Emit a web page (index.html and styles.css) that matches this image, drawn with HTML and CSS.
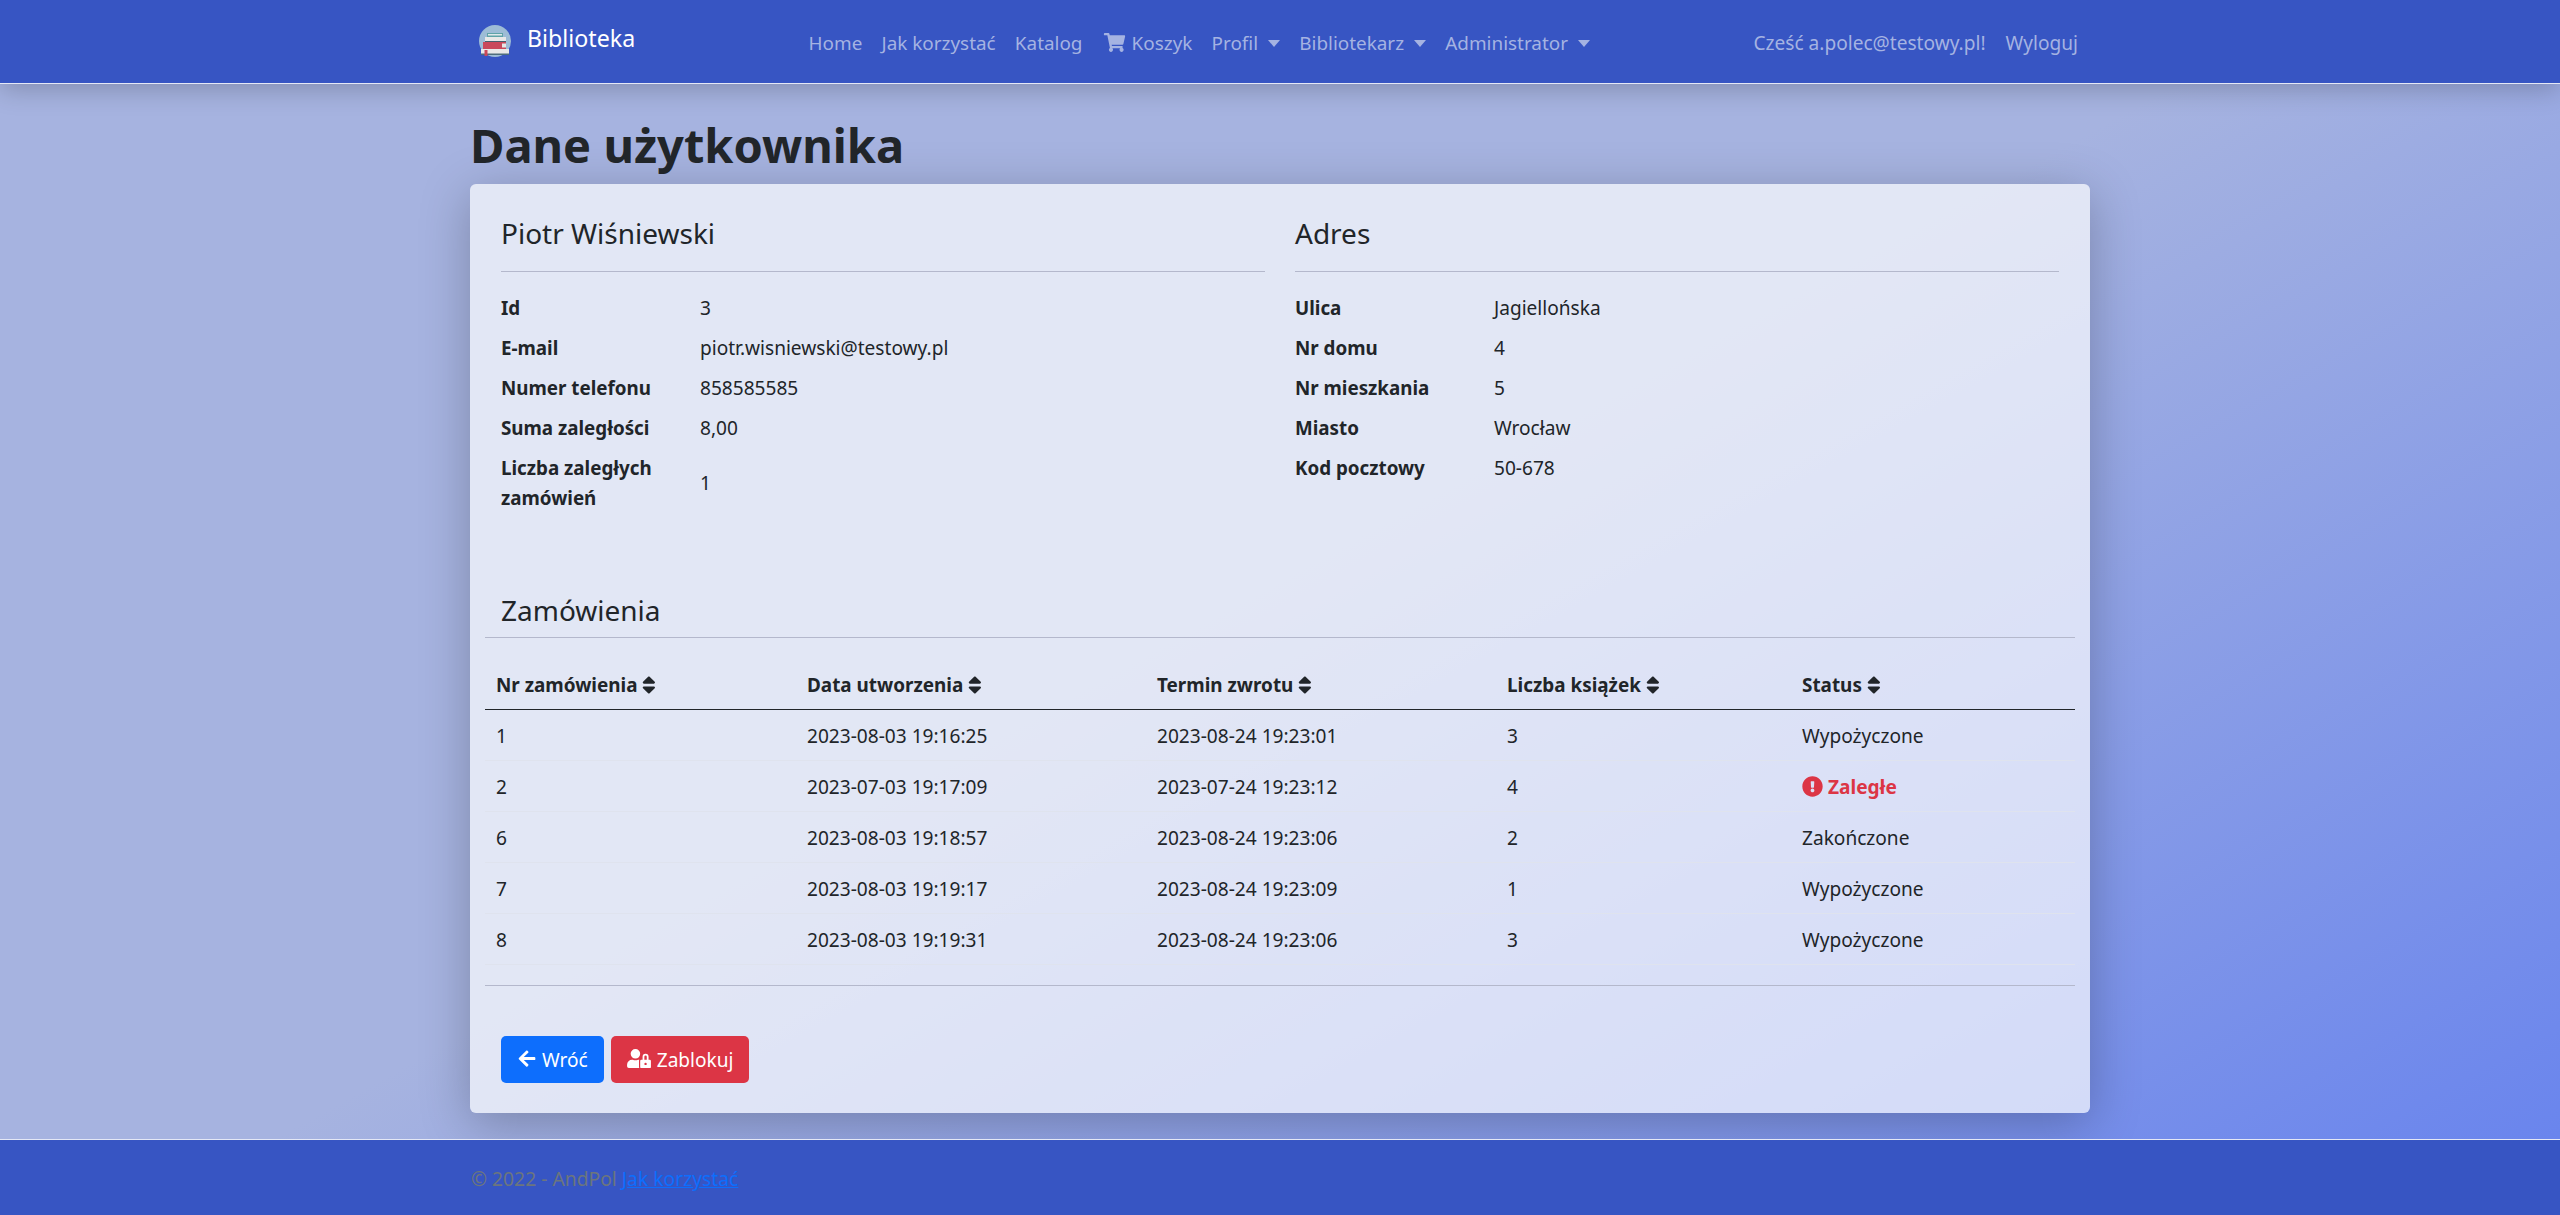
FILE: index.html
```html
<!DOCTYPE html>
<html lang="pl">
<head>
    <meta charset="UTF-8">
    <title>Dane użytkownika - Biblioteka</title>
    <link rel="stylesheet" href="styles.css">
</head>
<body>
    <nav class="navbar">
        <div class="navbar-inner">
            <a class="brand" href="#">
                <svg class="brand-logo" viewBox="0 0 32 32">
                    <circle cx="16" cy="16" r="16" fill="#9dbcd6"/>
                    <rect x="8" y="8" width="16" height="4" fill="#5fa3a8"/>
                    <rect x="9" y="9" width="14" height="1.5" fill="#dfe8ea"/>
                    <rect x="6" y="12" width="21" height="5" fill="#e8e8e8"/>
                    <rect x="6" y="16" width="21" height="1" fill="#45606e"/>
                    <rect x="4" y="17" width="23" height="7" fill="#c9485b"/>
                    <rect x="23" y="18.5" width="4" height="4" fill="#e6e6e6"/>
                    <rect x="2" y="24" width="28" height="5" fill="#e8e8e8"/>
                    <rect x="2" y="28.5" width="28" height="1.5" fill="#4d6d7c"/>
                    <rect x="5.5" y="25" width="3" height="6" fill="#c9485b"/>
                </svg>
                Biblioteka
            </a>
            <ul class="nav-list nav-main">
                <li><a class="nav-link" href="#">Home</a></li>
                <li><a class="nav-link" href="#">Jak korzystać</a></li>
                <li><a class="nav-link" href="#">Katalog</a></li>
                <li><a class="nav-link" href="#"><svg class="icon cart" viewBox="0 0 576 512"><path d="M528.12 301.319l47.273-208C578.806 78.301 567.391 64 551.99 64H159.208l-9.166-44.81C147.758 8.021 137.93 0 126.529 0H24C10.745 0 0 10.745 0 24v16c0 13.255 10.745 24 24 24h69.883l70.248 343.435C147.325 417.1 136 435.222 136 456c0 30.928 25.072 56 56 56s56-25.072 56-56c0-15.674-6.447-29.835-16.824-40h209.647C430.447 426.165 424 440.326 424 456c0 30.928 25.072 56 56 56s56-25.072 56-56c0-22.172-12.888-41.332-31.579-50.405l5.517-24.276c3.413-15.018-8.002-29.319-23.403-29.319H218.117l-6.545-32h293.145c11.206 0 20.92-7.754 23.403-18.681z"/></svg> Koszyk</a></li>
                <li><a class="nav-link caret" href="#">Profil</a></li>
                <li><a class="nav-link caret" href="#">Bibliotekarz</a></li>
                <li><a class="nav-link caret" href="#">Administrator</a></li>
            </ul>
            <ul class="nav-list nav-right">
                <li><a class="nav-link" href="#">Cześć a.polec@testowy.pl!</a></li>
                <li><a class="nav-link" href="#">Wyloguj</a></li>
            </ul>
        </div>
    </nav>

    <main class="container">
        <h1>Dane użytkownika</h1>
        <div class="card">
            <div class="row">
                <section class="col">
                    <h4>Piotr Wiśniewski</h4>
                    <hr>
                    <table class="info">
                        <tr><th>Id</th><td>3</td></tr>
                        <tr><th>E-mail</th><td>piotr.wisniewski@testowy.pl</td></tr>
                        <tr><th>Numer telefonu</th><td>858585585</td></tr>
                        <tr><th>Suma zaległości</th><td>8,00</td></tr>
                        <tr><th>Liczba zaległych zamówień</th><td>1</td></tr>
                    </table>
                </section>
                <section class="col">
                    <h4>Adres</h4>
                    <hr>
                    <table class="info">
                        <tr><th>Ulica</th><td>Jagiellońska</td></tr>
                        <tr><th>Nr domu</th><td>4</td></tr>
                        <tr><th>Nr mieszkania</th><td>5</td></tr>
                        <tr><th>Miasto</th><td>Wrocław</td></tr>
                        <tr><th>Kod pocztowy</th><td>50-678</td></tr>
                    </table>
                </section>
            </div>

            <h4 class="orders-title">Zamówienia</h4>
            <hr class="orders-rule">
            <table class="orders">
                <colgroup>
                    <col class="c1"><col class="c2"><col class="c3"><col class="c4"><col>
                </colgroup>
                <thead>
                    <tr>
                        <th>Nr zamówienia <svg class="icon sort" viewBox="0 0 320 512"><path d="M41 288h238c21.4 0 32.1 25.9 17 41L177 448c-9.4 9.4-24.6 9.4-33.9 0L24 329c-15.1-15.1-4.4-41 17-41zm255-105L177 64c-9.4-9.4-24.6-9.4-33.9 0L24 183c-15.1 15.1-4.4 41 17 41h238c21.4 0 32.1-25.9 17-41z"/></svg></th>
                        <th>Data utworzenia <svg class="icon sort" viewBox="0 0 320 512"><path d="M41 288h238c21.4 0 32.1 25.9 17 41L177 448c-9.4 9.4-24.6 9.4-33.9 0L24 329c-15.1-15.1-4.4-41 17-41zm255-105L177 64c-9.4-9.4-24.6-9.4-33.9 0L24 183c-15.1 15.1-4.4 41 17 41h238c21.4 0 32.1-25.9 17-41z"/></svg></th>
                        <th>Termin zwrotu <svg class="icon sort" viewBox="0 0 320 512"><path d="M41 288h238c21.4 0 32.1 25.9 17 41L177 448c-9.4 9.4-24.6 9.4-33.9 0L24 329c-15.1-15.1-4.4-41 17-41zm255-105L177 64c-9.4-9.4-24.6-9.4-33.9 0L24 183c-15.1 15.1-4.4 41 17 41h238c21.4 0 32.1-25.9 17-41z"/></svg></th>
                        <th>Liczba książek <svg class="icon sort" viewBox="0 0 320 512"><path d="M41 288h238c21.4 0 32.1 25.9 17 41L177 448c-9.4 9.4-24.6 9.4-33.9 0L24 329c-15.1-15.1-4.4-41 17-41zm255-105L177 64c-9.4-9.4-24.6-9.4-33.9 0L24 183c-15.1 15.1-4.4 41 17 41h238c21.4 0 32.1-25.9 17-41z"/></svg></th>
                        <th>Status <svg class="icon sort" viewBox="0 0 320 512"><path d="M41 288h238c21.4 0 32.1 25.9 17 41L177 448c-9.4 9.4-24.6 9.4-33.9 0L24 329c-15.1-15.1-4.4-41 17-41zm255-105L177 64c-9.4-9.4-24.6-9.4-33.9 0L24 183c-15.1 15.1-4.4 41 17 41h238c21.4 0 32.1-25.9 17-41z"/></svg></th>
                    </tr>
                </thead>
                <tbody>
                    <tr><td>1</td><td>2023-08-03 19:16:25</td><td>2023-08-24 19:23:01</td><td>3</td><td>Wypożyczone</td></tr>
                    <tr><td>2</td><td>2023-07-03 19:17:09</td><td>2023-07-24 19:23:12</td><td>4</td><td class="overdue"><svg class="icon alert" viewBox="0 0 512 512"><path d="M504 256c0 136.997-111.043 248-248 248S8 392.997 8 256C8 119.083 119.043 8 256 8s248 111.083 248 248zm-248 50c-25.405 0-46 20.595-46 46s20.595 46 46 46 46-20.595 46-46-20.595-46-46-46zm-43.673-165.346l7.418 136c.347 6.364 5.609 11.346 11.982 11.346h48.546c6.373 0 11.635-4.982 11.982-11.346l7.418-136c.375-6.874-5.098-12.654-11.982-12.654h-63.383c-6.884 0-12.356 5.78-11.981 12.654z"/></svg> Zaległe</td></tr>
                    <tr><td>6</td><td>2023-08-03 19:18:57</td><td>2023-08-24 19:23:06</td><td>2</td><td>Zakończone</td></tr>
                    <tr><td>7</td><td>2023-08-03 19:19:17</td><td>2023-08-24 19:23:09</td><td>1</td><td>Wypożyczone</td></tr>
                    <tr><td>8</td><td>2023-08-03 19:19:31</td><td>2023-08-24 19:23:06</td><td>3</td><td>Wypożyczone</td></tr>
                </tbody>
            </table>
            <hr class="orders-rule bottom-rule">
            <div class="actions">
                <a class="btn btn-primary" href="#"><svg class="icon arrow" viewBox="0 0 448 512"><path d="M257.5 445.1l-22.2 22.2c-9.4 9.4-24.6 9.4-33.9 0L7 273c-9.4-9.4-9.4-24.6 0-33.9L201.4 44.7c9.4-9.4 24.6-9.4 33.9 0l22.2 22.2c9.5 9.5 9.3 25-.4 34.3L136.6 216H424c13.3 0 24 10.7 24 24v32c0 13.3-10.7 24-24 24H136.6l120.5 114.8c9.8 9.3 10 24.8.4 34.3z"/></svg> Wróć</a>
                <a class="btn btn-danger" href="#"><svg class="icon lock" viewBox="0 0 640 512"><path d="M224 256A128 128 0 1 0 96 128a128 128 0 0 0 128 128zm96 64a63.08 63.08 0 0 1 8.1-30.5c-4.8-.5-9.5-1.5-14.5-1.5h-16.7a174.08 174.08 0 0 1-145.8 0h-16.7A134.43 134.43 0 0 0 0 422.4V464a48 48 0 0 0 48 48h280.9a63.54 63.54 0 0 1-8.9-32zm288-32h-32v-80a80 80 0 0 0-160 0v80h-32a32 32 0 0 0-32 32v160a32 32 0 0 0 32 32h224a32 32 0 0 0 32-32V320a32 32 0 0 0-32-32zM496 432a32 32 0 1 1 32-32 32 32 0 0 1-32 32zm32-144h-64v-80a32 32 0 0 1 64 0z"/></svg> Zablokuj</a>
            </div>
        </div>
    </main>

    <footer class="footer">
        <div class="footer-inner">© 2022 - AndPol <a href="#">Jak korzystać</a></div>
    </footer>
</body>
</html>
```

FILE: styles.css
```css
* {
    box-sizing: border-box;
}
html, body {
    margin: 0;
    height: 100%;
}
body {
    display: flex;
    flex-direction: column;
    background: linear-gradient(151deg, #a6b3e0 49%, #6682ee 100%);
    color: #212529;
    font-family: "Noto Sans", Arial, sans-serif;
    font-size: 19.1px;
    line-height: 30px;
}
a {
    text-decoration: none;
}
.icon {
    height: 1em;
    fill: currentColor;
    vertical-align: -2px;
}

.navbar {
    height: 84px;
    flex: none;
    background-color: #3755c3;
    border-bottom: 1px solid #e4e8f6;
    box-shadow: 0 5px 25px rgba(0, 0, 0, 0.22);
}
.navbar-inner {
    width: 1650px;
    margin: 0 auto;
    display: flex;
    align-items: center;
    height: 83px;
    padding-left: 24px;
}
.brand {
    display: flex;
    align-items: center;
    width: 320px;
    gap: 16px;
    color: white;
    font-size: 23.2px;
    margin-top: -8px;
}
.brand-logo {
    width: 32px;
    height: 32px;
    margin-top: 6px;
}
.nav-list {
    list-style: none;
    display: flex;
    margin: 0;
    padding: 2px 0 0;
}
.nav-main {
    font-size: 18.9px;
}
.nav-main .nav-link {
    padding: 0 9.6px;
}
.nav-right {
    margin-left: auto;
    padding-right: 17px;
}
.nav-link {
    display: block;
    padding: 0 10px;
    color: #a5b3e2;
    white-space: nowrap;
}
.cart {
    width: 25px;
}
.caret::after {
    content: "";
    display: inline-block;
    margin-left: 10px;
    vertical-align: 3px;
    border-top: 7px solid;
    border-left: 6px solid transparent;
    border-right: 6px solid transparent;
}

.container {
    width: 1650px;
    margin: 0 auto;
    padding: 0 15px;
    flex: 1;
}
h1 {
    margin: 31px 0 9px;
    font-size: 47px;
    line-height: 60px;
    font-weight: 700;
}
.card {
    height: 929px;
    padding: 0 15px;
    background-color: rgba(255, 255, 255, 0.68);
    border-radius: 6px;
    box-shadow: 0 10px 50px rgba(0, 0, 0, 0.25);
}
.row {
    display: grid;
    grid-template-columns: 1fr 1fr;
    height: 405px;
}
.col {
    padding: 0 0 0 16px;
    margin-right: 15px;
}
.col + .col {
    padding-left: 15px;
    margin-right: 16px;
}
h4 {
    margin: 0;
    padding-top: 27px;
    font-size: 28px;
    font-weight: 400;
    line-height: 45px;
}
hr {
    margin: 15px 0 0;
    border: 0;
    border-top: 1px solid #b4b8cc;
}
.info {
    border-collapse: collapse;
    margin-top: 16px;
}
.info th {
    width: 199px;
    padding: 5px 10px 5px 0;
    text-align: left;
    font-size: 18.8px;
    font-weight: 700;
}
.info td {
    padding: 5px 0;
}

.orders-title {
    padding: 0 0 2px 16px;
    line-height: 50px;
    margin-top: -4px;
}
.orders-rule {
    margin: 0;
}
.orders {
    width: 100%;
    margin-top: 20px;
    border-collapse: collapse;
    table-layout: fixed;
}
.c1 {
    width: 311px;
}
.c2, .c3 {
    width: 350px;
}
.c4 {
    width: 295px;
}
.orders th, .orders td {
    padding: 11px 10px 9px 11px;
    text-align: left;
    height: 51px;
}
.orders th {
    padding-top: 12px;
    padding-bottom: 8px;
    font-size: 18.9px;
    font-weight: 700;
    border-bottom: 1.5px solid #212529;
}
.orders td {
    border-bottom: 1px solid #dfe3ee;
}
.sort {
    height: 22px;
    vertical-align: -4px;
}
.overdue {
    color: #dc3545;
    font-weight: 700;
}
.alert {
    height: 21px;
    vertical-align: -3px;
}
.bottom-rule {
    margin-top: 20px;
}
.actions {
    display: flex;
    gap: 7px;
    padding: 50px 0 0 16px;
}
.btn {
    display: inline-block;
    height: 47px;
    padding: 9px 15px 0;
    border-radius: 5px;
    color: white;
    white-space: nowrap;
}
.btn-primary {
    padding-left: 16px;
    padding-right: 16px;
    background-color: #0d6efd;
}
.btn-danger {
    background-color: #dc3545;
}
.arrow {
    width: 20px;
}
.lock {
    width: 26px;
}

.footer {
    height: 76px;
    flex: none;
    background-color: #3755c3;
    border-top: 1px solid #e4e8f6;
}
.footer-inner {
    width: 1650px;
    margin: 0 auto;
    padding: 24px 0 0 16px;
    color: #6c757d;
    font-size: 19.3px;
}
.footer-inner a {
    color: #0d6efd;
    text-decoration: underline;
}
```
